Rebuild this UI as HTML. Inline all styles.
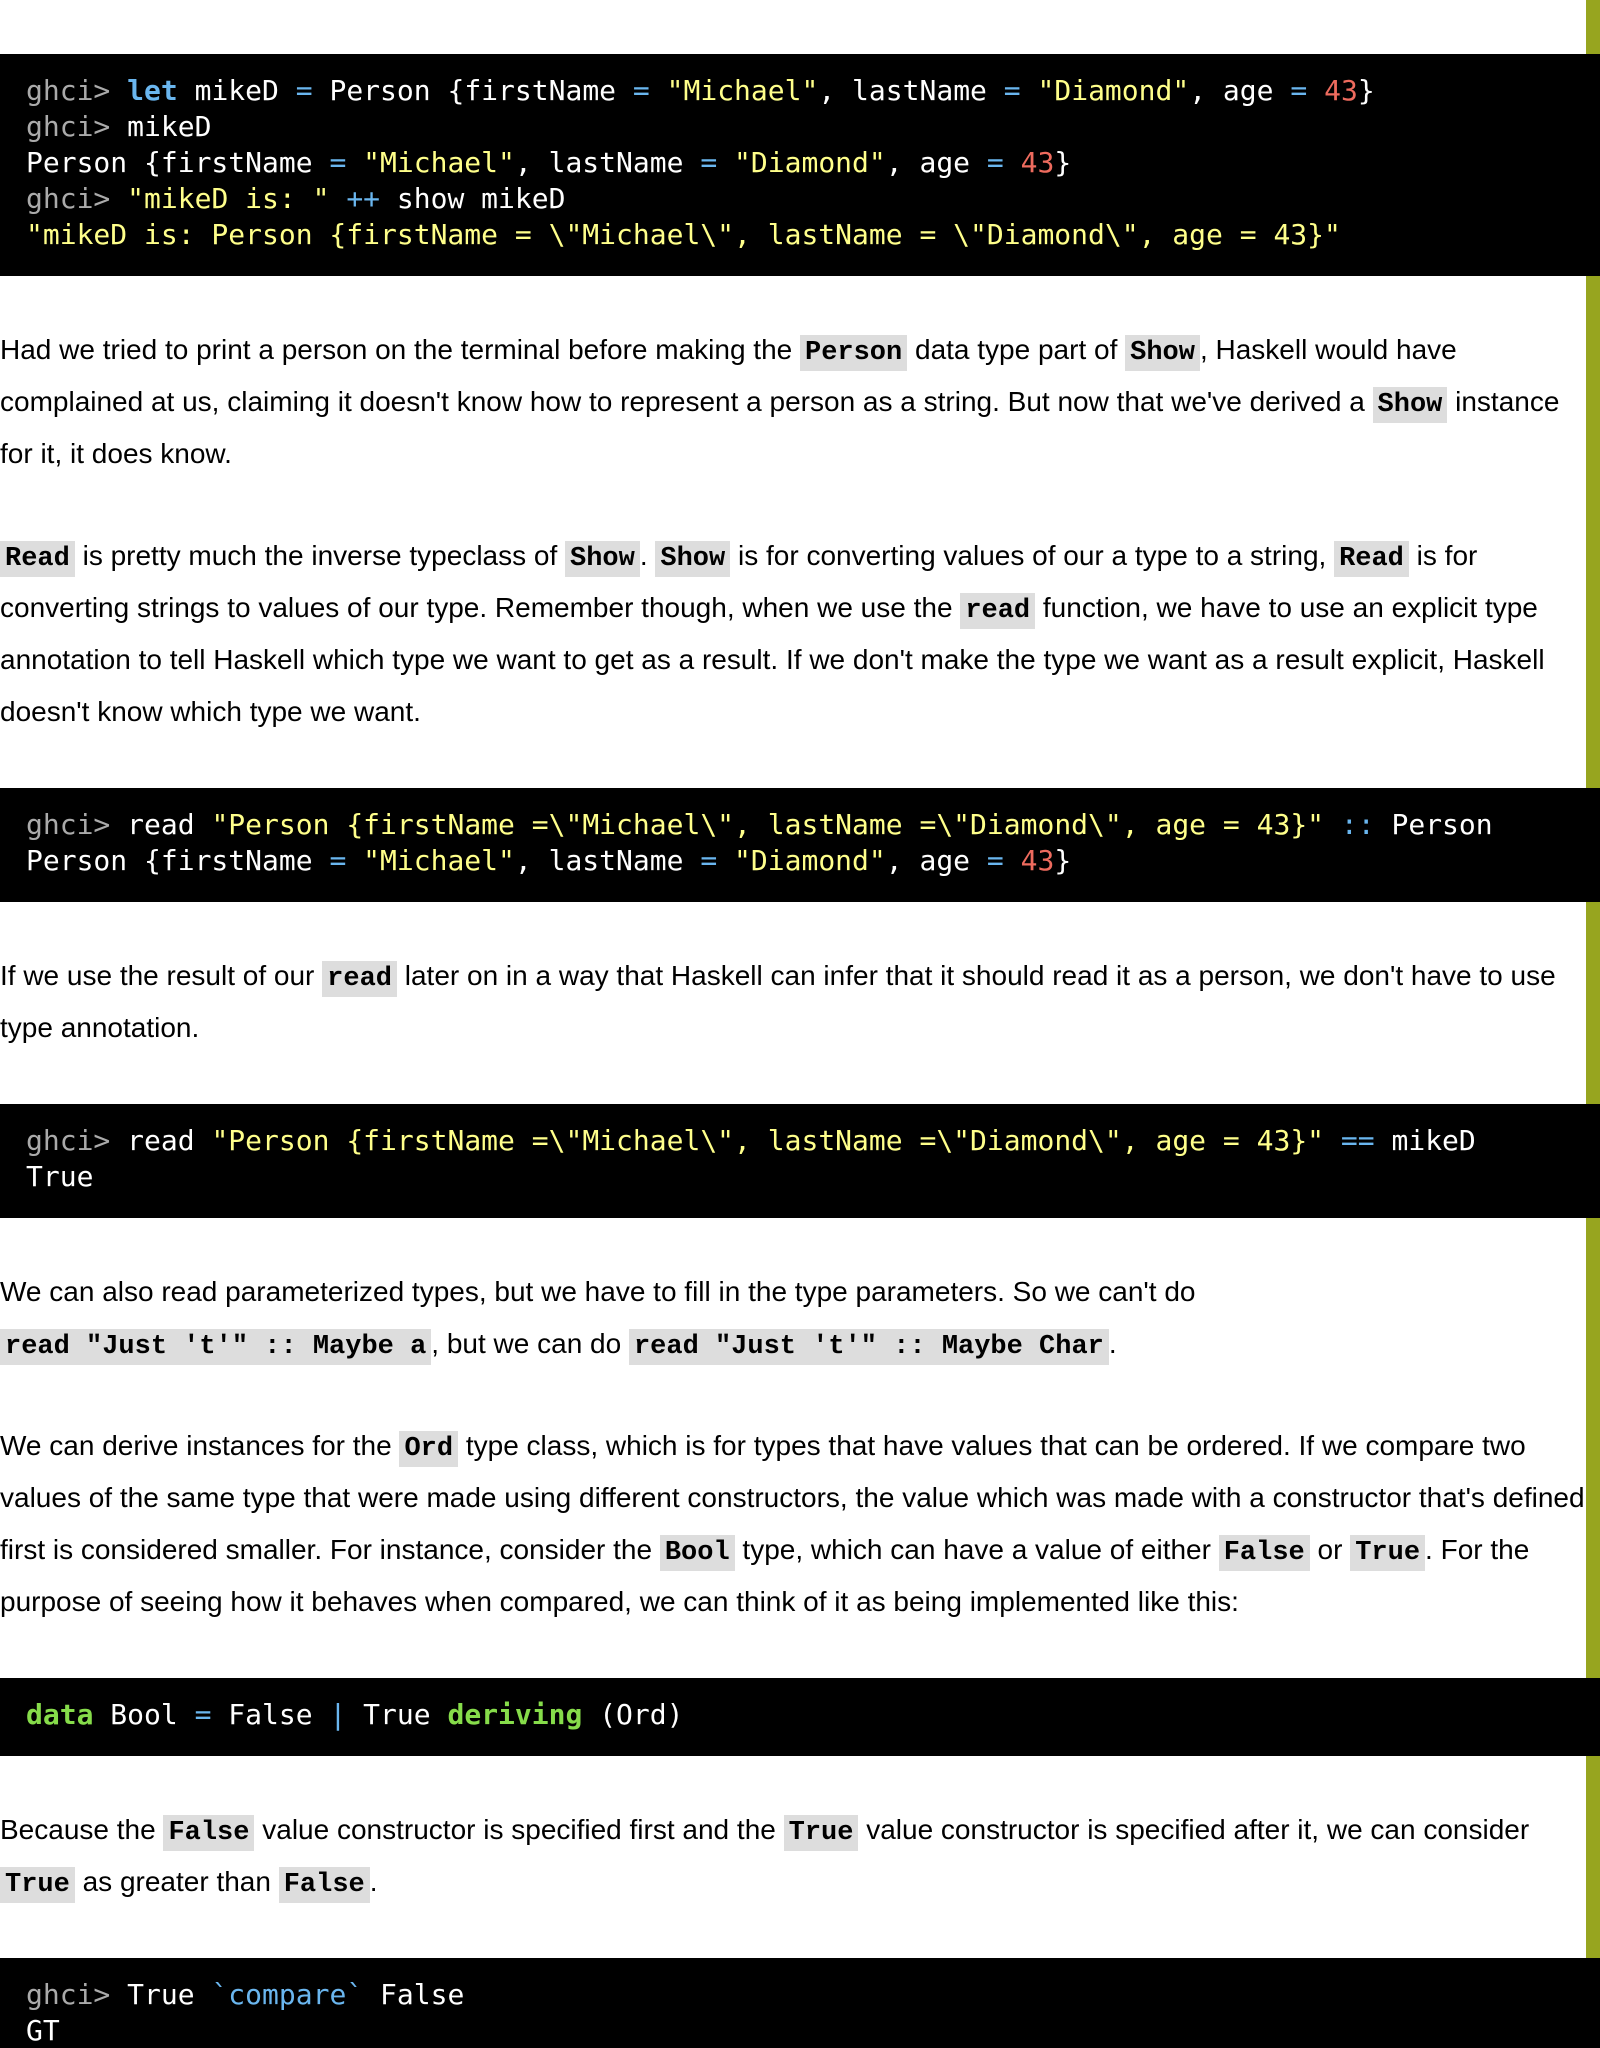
<!DOCTYPE html>
<html><head><meta charset="utf-8"><style>
html{margin:0;padding:0;height:2048px;overflow:hidden;background:#fff}
body{margin:0;padding:0;background:#fff;width:1600px;height:2048px;overflow:hidden;position:relative;font-family:"Liberation Sans",Arial,sans-serif;font-size:28px;color:#000}
.bar{position:absolute;right:0;top:0;width:14px;height:2048px;background:#97a51f}
.main{position:absolute;left:0;top:54px;width:1600px}
pre{margin:0;background:#000;color:#fff;font-family:"DejaVu Sans Mono",monospace;font-size:28px;line-height:36px;padding:19px 26px 23px;white-space:pre}
p{margin:48px 0 50px;line-height:52px;white-space:nowrap;width:1586px}
code{font-family:"Liberation Mono",monospace;font-weight:bold;background:#ddd;padding:3px 5px;font-size:27px;line-height:1}
.g{color:#aaa}.k{color:#6ab6ef;font-weight:bold}.o{color:#6ab6ef}.s{color:#ffff8a}.n{color:#ee6b5e}.d{color:#86dc4a;font-weight:bold}
</style></head><body>
<div class="bar"></div>
<div class="main">
<pre><span class="g">ghci&gt;</span> <span class="k">let</span> mikeD <span class="o">=</span> Person {firstName <span class="o">=</span> <span class="s">"Michael"</span>, lastName <span class="o">=</span> <span class="s">"Diamond"</span>, age <span class="o">=</span> <span class="n">43</span>}
<span class="g">ghci&gt;</span> mikeD
Person {firstName <span class="o">=</span> <span class="s">"Michael"</span>, lastName <span class="o">=</span> <span class="s">"Diamond"</span>, age <span class="o">=</span> <span class="n">43</span>}
<span class="g">ghci&gt;</span> <span class="s">"mikeD is: "</span> <span class="o">++</span> show mikeD
<span class="s">"mikeD is: Person {firstName = \"Michael\", lastName = \"Diamond\", age = 43}"</span></pre>
<p>Had we tried to print a person on the terminal before making the <code>Person</code> data type part of <code>Show</code>, Haskell would have<br>complained at us, claiming it doesn't know how to represent a person as a string. But now that we've derived a <code>Show</code> instance<br>for it, it does know.</p>
<p><code>Read</code> is pretty much the inverse typeclass of <code>Show</code>. <code>Show</code> is for converting values of our a type to a string, <code>Read</code> is for<br>converting strings to values of our type. Remember though, when we use the <code>read</code> function, we have to use an explicit type<br>annotation to tell Haskell which type we want to get as a result. If we don't make the type we want as a result explicit, Haskell<br>doesn't know which type we want.</p>
<pre><span class="g">ghci&gt;</span> read <span class="s">"Person {firstName =\"Michael\", lastName =\"Diamond\", age = 43}"</span> <span class="o">::</span> Person
Person {firstName <span class="o">=</span> <span class="s">"Michael"</span>, lastName <span class="o">=</span> <span class="s">"Diamond"</span>, age <span class="o">=</span> <span class="n">43</span>}</pre>
<p>If we use the result of our <code>read</code> later on in a way that Haskell can infer that it should read it as a person, we don't have to use<br>type annotation.</p>
<pre><span class="g">ghci&gt;</span> read <span class="s">"Person {firstName =\"Michael\", lastName =\"Diamond\", age = 43}"</span> <span class="o">==</span> mikeD
True</pre>
<p>We can also read parameterized types, but we have to fill in the type parameters. So we can't do<br><code>read "Just 't'" :: Maybe a</code>, but we can do <code>read "Just 't'" :: Maybe Char</code>.</p>
<p>We can derive instances for the <code>Ord</code> type class, which is for types that have values that can be ordered. If we compare two<br>values of the same type that were made using different constructors, the value which was made with a constructor that's defined<br>first is considered smaller. For instance, consider the <code>Bool</code> type, which can have a value of either <code>False</code> or <code>True</code>. For the<br>purpose of seeing how it behaves when compared, we can think of it as being implemented like this:</p>
<pre><span class="d">data</span> Bool <span class="o">=</span> False <span class="o">|</span> True <span class="d">deriving</span> (Ord)</pre>
<p>Because the <code>False</code> value constructor is specified first and the <code>True</code> value constructor is specified after it, we can consider<br><code>True</code> as greater than <code>False</code>.</p>
<pre><span class="g">ghci&gt;</span> True <span class="o">`compare`</span> False
GT
<span class="g">ghci&gt;</span> True <span class="o">&gt;</span> False</pre>
</div>
</body></html>
